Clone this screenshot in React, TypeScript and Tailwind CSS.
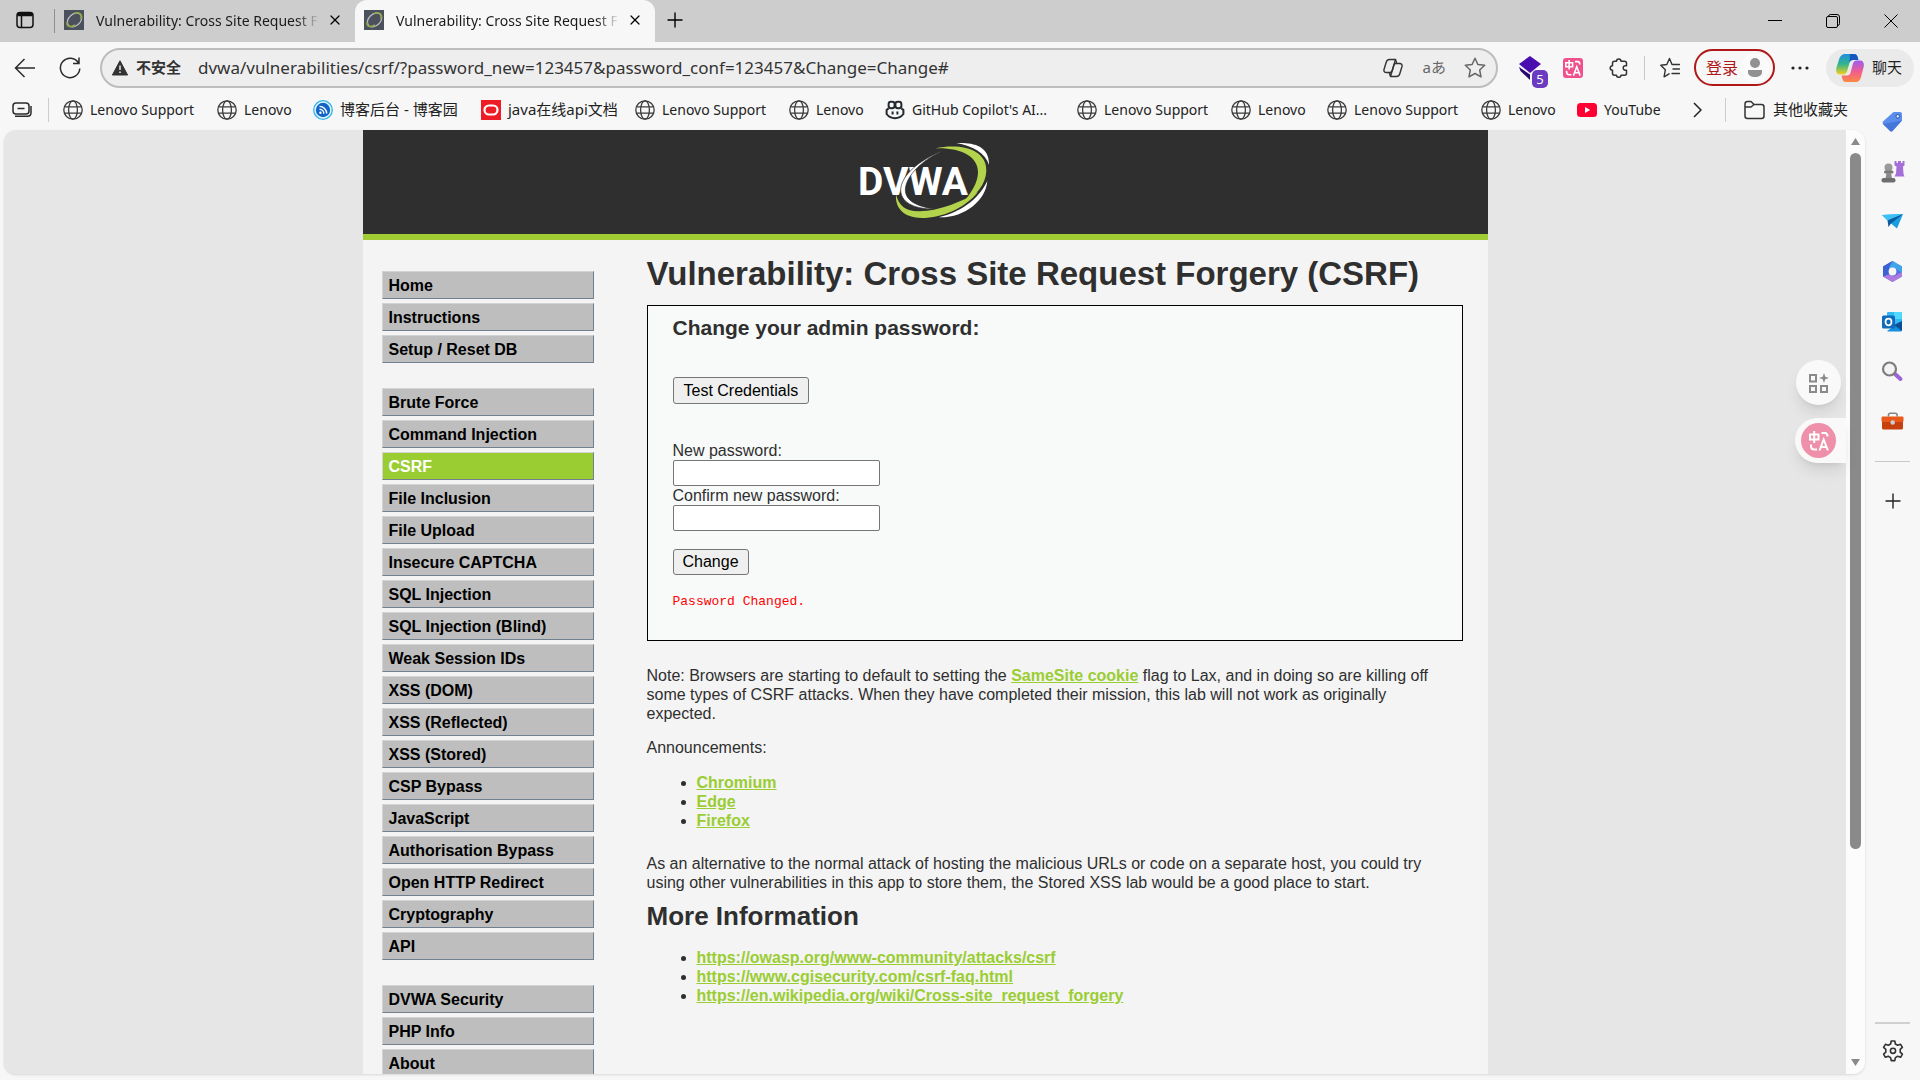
import { clsx } from 'clsx';
import { Plus, X } from 'lucide-react';
import type { ReactNode } from 'react';

const menuGroups = [
  ['Home', 'Instructions', 'Setup / Reset DB'],
  [
    'Brute Force',
    'Command Injection',
    'CSRF',
    'File Inclusion',
    'File Upload',
    'Insecure CAPTCHA',
    'SQL Injection',
    'SQL Injection (Blind)',
    'Weak Session IDs',
    'XSS (DOM)',
    'XSS (Reflected)',
    'XSS (Stored)',
    'CSP Bypass',
    'JavaScript',
    'Authorisation Bypass',
    'Open HTTP Redirect',
    'Cryptography',
    'API',
  ],
  ['DVWA Security', 'PHP Info', 'About'],
];

const announcements = ['Chromium', 'Edge', 'Firefox'];

const moreInfo = [
  'https://owasp.org/www-community/attacks/csrf',
  'https://www.cgisecurity.com/csrf-faq.html',
  'https://en.wikipedia.org/wiki/Cross-site_request_forgery',
];

function GlobeIcon() {
  return (
    <svg className="size-5 shrink-0" viewBox="0 0 20 20" fill="none" stroke="#3b3b3b" strokeWidth="1.3">
      <circle cx="10" cy="10" r="9.2" />
      <ellipse cx="10" cy="10" rx="4.4" ry="9.2" />
      <path d="M1.600 6.800h16.800M1.600 13.200h16.800" />
    </svg>
  );
}

function BlogIcon() {
  return (
    <svg className="size-5 shrink-0" viewBox="0 0 20 20">
      <circle cx="10" cy="10" r="9.3" fill="#e8f6fd" stroke="#2db4ea" strokeWidth="1.3" />
      <circle cx="10" cy="10" r="7.2" fill="#1264c8" />
      <g fill="none" stroke="#fff" strokeWidth="1.4">
        <path d="M6.5 9.3a4.5 4.5 0 0 1 4.4 4.4M6.5 6.4a7.3 7.3 0 0 1 7.2 7.2" />
      </g>
      <circle cx="7.4" cy="12.7" r="1.2" fill="#fff" />
    </svg>
  );
}

function OracleIcon() {
  return (
    <svg className="size-5 shrink-0" viewBox="0 0 20 20">
      <rect width="20" height="20" fill="#ee1c24" />
      <rect x="3.5" y="5.5" width="13" height="9" rx="4.5" fill="none" stroke="#fff" strokeWidth="2.2" />
    </svg>
  );
}

function CopilotGithubIcon() {
  return (
    <svg className="size-5 shrink-0" viewBox="0 0 20 20" fill="none" stroke="#24292f" strokeWidth="2">
      <rect x="3.6" y="1.8" width="6" height="6.4" rx="2.4" />
      <rect x="10.4" y="1.8" width="6" height="6.4" rx="2.4" />
      <path d="M3.6 8.4 1.6 10v4c2 2.6 5 4.2 8.4 4.2s6.4-1.6 8.4-4.2v-4l-2-1.6" />
      <path d="M7.6 11.5v3M12.4 11.5v3" />
    </svg>
  );
}

function YoutubeIcon() {
  return (
    <svg className="size-5 shrink-0" viewBox="0 0 20 20">
      <rect y="3" width="20" height="14" rx="3.5" fill="#ff0033" />
      <path d="M8 7v6l5.2-3z" fill="#fff" />
    </svg>
  );
}

const bookmarks: { label: string; icon: ReactNode; width: string }[] = [
  { label: 'Lenovo Support', icon: <GlobeIcon />, width: 'w-[154px]' },
  { label: 'Lenovo', icon: <GlobeIcon />, width: 'w-24' },
  { label: '博客后台 - 博客园', icon: <BlogIcon />, width: 'w-[168px] text-[15px]' },
  { label: 'java在线api文档', icon: <OracleIcon />, width: 'w-[154px] text-[15px]' },
  { label: 'Lenovo Support', icon: <GlobeIcon />, width: 'w-[154px]' },
  { label: 'Lenovo', icon: <GlobeIcon />, width: 'w-24' },
  { label: "GitHub Copilot's AI...", icon: <CopilotGithubIcon />, width: 'w-48' },
  { label: 'Lenovo Support', icon: <GlobeIcon />, width: 'w-[154px]' },
  { label: 'Lenovo', icon: <GlobeIcon />, width: 'w-24' },
  { label: 'Lenovo Support', icon: <GlobeIcon />, width: 'w-[154px]' },
  { label: 'Lenovo', icon: <GlobeIcon />, width: 'w-24' },
  { label: 'YouTube', icon: <YoutubeIcon />, width: 'w-24' },
];

function Favicon() {
  return (
    <svg className="size-5 shrink-0" viewBox="0 0 20 20">
      <rect width="20" height="20" fill="#4b515c" />
      <ellipse cx="10.5" cy="10" rx="8" ry="5.8" fill="none" stroke="#b9bcc0" strokeWidth="1.3" transform="rotate(-42 10.500 10)" />
      <path d="M10 3.500c5-2 8.500.5 7 5.500M3 12c-.5 4.500 3.500 6 8 3" fill="none" stroke="#93a84c" strokeWidth="1.6" />
    </svg>
  );
}

function Tab({ active }: { active?: boolean }) {
  return (
    <div className={clsx('flex h-full w-[300px] items-center pb-0.5 pl-[9px] pr-3', active && 'rounded-t-xl bg-[#f7f7f7]')}>
      <Favicon />
      <span className="ml-3 w-[224px] overflow-hidden whitespace-nowrap text-[14px] text-[#1b1b1b] [mask-image:linear-gradient(to_right,#000_90%,transparent)]">
        Vulnerability: Cross Site Request Forgery
      </span>
      <button className="ml-2" aria-label="Close tab">
        <X className="size-4 text-black" strokeWidth={1.8} />
      </button>
    </div>
  );
}

function TitleBar() {
  return (
    <div className="flex h-[42px] items-center bg-[#cdcdcd]">
      <button className="ml-4 mr-5 pb-0.5" aria-label="Tab actions">
        <svg className="size-[18px]" viewBox="0 0 18 18" fill="none" stroke="#111" strokeWidth="1.5">
          <rect x="1" y="1.5" width="16" height="15" rx="3" />
          <path d="M1.500 3.500h15" strokeWidth="3.5" />
          <path d="M5.500 5v11" />
        </svg>
      </button>
      <div className="h-6 w-px bg-[#8f8f8f]" />
      <Tab />
      <Tab active />
      <button className="ml-2 pb-0.5" aria-label="New tab">
        <Plus className="size-6 text-black" strokeWidth={1.4} />
      </button>
      <div className="ml-auto flex items-center gap-[44px] pr-[22px]">
        <button aria-label="Minimize">
          <svg className="size-[14px]" viewBox="0 0 14 14" stroke="#000"><path d="M0 6.500h14" /></svg>
        </button>
        <button aria-label="Restore">
          <svg className="size-[14px]" viewBox="0 0 14 14" fill="none" stroke="#000">
            <rect x=".5" y="2.5" width="11" height="11" rx="1.5" />
            <path d="M2.500 2.500Q2.500.5 4.500.5H11Q13.500.5 13.500 3V9.500Q13.500 11.500 11.500 11.500" />
          </svg>
        </button>
        <button aria-label="Close">
          <svg className="size-[14px]" viewBox="0 0 14 14" stroke="#000"><path d="M.5.5l13 13M13.500.5l-13 13" /></svg>
        </button>
      </div>
    </div>
  );
}

function CopilotLogo() {
  return (
    <svg className="size-7 shrink-0" viewBox="0 0 28 28">
      <defs>
        <linearGradient id="cpA" x1="0" y1="0" x2="0" y2="1">
          <stop offset="0" stopColor="#1d8fe0" />
          <stop offset=".5" stopColor="#33b58a" />
          <stop offset="1" stopColor="#f6cf1c" />
        </linearGradient>
        <linearGradient id="cpB" x1="0" y1="0" x2="0" y2="1">
          <stop offset="0" stopColor="#9a5cf0" />
          <stop offset=".5" stopColor="#ef5d92" />
          <stop offset="1" stopColor="#ff8a3c" />
        </linearGradient>
      </defs>
      <path d="M10 0h8c2 0 3 1 3.6 3l.8 3H17c-2 0-3 1-3.6 3l-2.200 8c-.7 2.500-2 3.500-4.200 3.500H4C.5 20.500-.5 17 .5 13.500L3 5.500C4 2 6 0 10 0z" fill="url(#cpA)" />
      <path d="M14 0h4c2 0 3 1 3.600 3l.8 3H17c-2 0-3 1-3.600 3z" fill="#1556c0" />
      <path d="M18 28h-8c-2 0-3-1-3.600-3l-.8-3.500H11c2 0 3-1 3.600-3l2.200-8.500c.7-2.500 2-3.500 4.200-3.500h3c3.500 0 4.500 3.500 3.500 7l-2.500 9.500c-1 3.500-3 5.500-7 5.500z" fill="url(#cpB)" />
    </svg>
  );
}

function ExtensionCube() {
  return (
    <div className="relative">
      <svg className="h-6 w-[22px]" viewBox="0 0 22 24">
        <path d="M11 0 22 8 11 17 0 8z" fill="#4a0db0" />
        <path d="M0 11 11 18.500v5.500L1.500 15z" fill="#2a0670" />
      </svg>
      <span className="absolute -right-[7px] -bottom-2 h-[18px] w-4 rounded-[5px] bg-[#6b3cc0] text-center text-[13px] leading-[18px] text-white">5</span>
    </div>
  );
}

// "中 / A" glyph shared by the toolbar button and the floating button
function TranslateGlyph({ className }: { className: string }) {
  return (
    <svg className={className} viewBox="0 0 20 20" fill="none" stroke="#fff" strokeWidth="2">
      <path d="M1 3.500h8.500V8.500H1zM5.200 0v12M12.500 2h3.500q2.500 0 2.500 3.500M2 13.500v1.500q0 3.500 3.500 3.500H8" />
      <path d="m10.500 19.500 4.200-11 4.200 11M12 16h5.500" />
    </svg>
  );
}

function StarIcon({ className }: { className: string }) {
  return (
    <svg className={className} viewBox="0 0 22 22" fill="none" stroke="currentColor" strokeWidth="1.5" strokeLinejoin="round">
      <path d="m11 1.200 2.900 6.300 6.800.8-5 4.700 1.300 6.900-6-3.400-6 3.400 1.300-6.900-5-4.700 6.800-.8z" />
    </svg>
  );
}

function Toolbar() {
  return (
    <div className="flex h-[51px] items-center pl-[14px] pr-[6px]">
      <button aria-label="Back">
        <svg className="size-[22px]" viewBox="0 0 22 22" fill="none" stroke="#2b2b2b" strokeWidth="1.5">
          <path d="M21 11H2M10.500 2 1.500 11l9 9" />
        </svg>
      </button>
      <button className="ml-[22px]" aria-label="Refresh">
        <svg className="size-6" viewBox="0 0 24 24" fill="none" stroke="#2b2b2b" strokeWidth="1.5">
          <path d="M20.500 7A9.700 9.700 0 1 0 21.800 12.500M21 1.500V7.500H15" />
        </svg>
      </button>
      <div className="ml-[18px] flex h-10 flex-1 items-center rounded-full border-2 border-[#bdbdbd] bg-[#eee] pr-2.5">
        <svg className="ml-2.5 size-4 shrink-0" viewBox="0 0 16 16">
          <path d="M8 .8 15.600 15H.4z" fill="#333" stroke="#333" strokeLinejoin="round" />
          <path d="M8 5.500v4.500M8 11.500v1.600" stroke="#eee" strokeWidth="1.5" />
        </svg>
        <span className="ml-2 text-[15px] font-bold text-[#333]">不安全</span>
        <input
          className="ml-[17px] min-w-0 flex-1 bg-transparent text-[17px] text-[#333] outline-none"
          aria-label="Address"
          defaultValue="dvwa/vulnerabilities/csrf/?password_new=123457&password_conf=123457&Change=Change#"
        />
        <button aria-label="Copilot">
          <svg className="size-5" viewBox="0 0 20 20" fill="none" stroke="#333" strokeWidth="1.4" strokeLinejoin="round">
            <path d="M6.500 1.500h6l-3.200 11c-.4 1.500-1 2-2.300 2H3.200C1.500 14.500.6 13 1 11.500L3.300 4c.5-1.700 1.500-2.500 3.200-2.500z" />
            <path d="M13.500 18.500h-6l3.200-11c.4-1.500 1-2 2.300-2h3.800c1.700 0 2.600 1.500 2.200 3L16.700 16c-.5 1.700-1.500 2.500-3.200 2.500zM12.500 1.500l1.300 4M7.500 18.500l-1.300-4" />
          </svg>
        </button>
        <button className="ml-5 text-[15px] text-[#666]">aあ</button>
        <button className="ml-[18px]" aria-label="Favorite">
          <StarIcon className="size-[22px] text-[#666]" />
        </button>
      </div>
      <div className="ml-[21px]"><ExtensionCube /></div>
      <button className="ml-[22px] flex size-5 items-center justify-center rounded-[3px] bg-[#f0508c]" aria-label="Translate">
        <TranslateGlyph className="size-4" />
      </button>
      <button className="ml-[26px]" aria-label="Extensions">
        <svg className="size-5" viewBox="0 0 20 20" fill="none" stroke="#333" strokeWidth="1.5" strokeLinejoin="round">
          <path d="M7.500 3.200c0-3 4.500-3 4.500 0h3.500q2 0 2 2v2.600h-1.200c-2.800 0-2.800 4.400 0 4.400h1.200v3q0 2-2 2H12c0 2.800-4.500 2.800-4.500 0H5.500q-2 0-2-2v-3C.4 12.200.4 7.800 3.500 7.800V5.200q0-2 2-2z" />
        </svg>
      </button>
      <div className="ml-[15px] h-6 w-px bg-[#c8c8c8]" />
      <button className="ml-[15px]" aria-label="Favorites">
        <svg className="h-[22px] w-5" viewBox="0 0 20 22" fill="none" stroke="#333" strokeWidth="1.4" strokeLinejoin="round" strokeLinecap="round">
          <path d="M12 7.500 9.500 1.500 6.800 7.500.8 8.300l4.500 4.500-1.200 7 5-3M12 7.500h7.500M13 12h6.500M12 16.500h7.500" />
        </svg>
      </button>
      <button className="ml-[14px] flex h-[37px] w-[81px] items-center rounded-full border-2 border-[#b01818] pl-2.5 text-[16px] text-[#b01818]">
        登录
        <svg className="ml-auto mr-1 size-7" viewBox="0 0 28 28" fill="#919191">
          <circle cx="14" cy="14" r="13.5" fill="#fafafa" stroke="#fff" />
          <circle cx="14" cy="9" r="5" />
          <path d="M7 16h14v2c0 3.500-3 5-7 5s-7-1.500-7-5z" />
        </svg>
      </button>
      <button className="ml-4" aria-label="More">
        <svg className="h-1 w-[18px]" viewBox="0 0 18 4" fill="#222">
          <circle cx="2" cy="2" r="1.6" /><circle cx="9" cy="2" r="1.6" /><circle cx="16" cy="2" r="1.6" />
        </svg>
      </button>
      <button className="ml-[17px] flex h-[38px] w-[88px] items-center gap-2 rounded-full bg-[#eaeaea] pl-2.5 text-[15px] text-[#222]">
        <CopilotLogo />
        聊天
      </button>
    </div>
  );
}

function BookmarkBar() {
  return (
    <div className="flex h-[37px] items-center pb-1 pl-3 text-[14px] text-[#222]">
      <button aria-label="Workspaces">
        <svg className="h-4 w-5" viewBox="0 0 20 16" fill="none" stroke="#2b2b2b" strokeWidth="1.5">
          <rect x="1" y="1" width="16" height="11" rx="3" />
          <path d="M5.500 6.500h7M3 14.200h12.500q3.500 0 3.500-3.500V4" />
        </svg>
      </button>
      <div className="ml-4 mr-[14px] h-6 w-px shrink-0 bg-[#ccc]" />
      <nav className="flex items-center">
        {bookmarks.map(({ label, icon, width }, i) => (
          <a key={i} href="#" className={clsx('flex shrink-0 items-center gap-[7px] whitespace-nowrap', width)}>
            {icon}
            {label}
          </a>
        ))}
      </nav>
      <button className="ml-auto" aria-label="More bookmarks">
        <svg className="h-4 w-[9px]" viewBox="0 0 9 16" fill="none" stroke="#222" strokeWidth="1.5"><path d="m1 1 7 7-7 7" /></svg>
      </button>
      <div className="ml-[23px] h-6 w-px bg-[#ccc]" />
      <a href="#" className="ml-[18px] mr-[72px] flex items-center gap-2 text-[15px] whitespace-nowrap">
        <svg className="h-5 w-[21px]" viewBox="0 0 21 20" fill="none" stroke="#333" strokeWidth="1.5" strokeLinejoin="round">
          <path d="M1 4q0-2.500 2.500-2.500H7l3 3h7.500Q20 4.500 20 7v9q0 2.500-2.500 2.500h-14Q1 18.500 1 16zM1 7h6l3-2.500" />
        </svg>
        其他收藏夹
      </a>
    </div>
  );
}

function DvwaLogo() {
  return (
    <svg className="h-[78px] w-[134px]" viewBox="30 21 402 234" role="img" aria-label="DVWA">
      <path d="M325 24c45-2 100 5 98 66-10-35-50-58-98-66z" fill="#fff" />
      <path d="M418 138c-5 60-70 112-146 109 60-14 118-50 146-109z" fill="#fff" />
      <path d="M262 40c80-16 155 5 153 68-2 38-28 75-75 101 30-35 50-65 50-98 0-48-54-74-128-71z" fill="#b2d34b" />
      <path d="M144 178c8 36 32 52 70 51 62-2 125-28 176-58-40 50-110 78-168 78-50 0-82-26-78-71z" fill="#b2d34b" />
      <text x="30" y="180" fill="#fff" className="font-[Roboto,sans-serif] text-[117px] font-bold">DVWA</text>
      <path d="M283 47C215 75 160 120 158 164c0 36 36 58 100 58-50-8-86-24-86-58 2-42 50-88 111-117z" fill="#fff" stroke="#2f2f2f" strokeWidth="2" />
    </svg>
  );
}

function SideMenu() {
  return (
    <nav className="flex w-[212px] shrink-0 flex-col gap-[25px]">
      {menuGroups.map((group, i) => (
        <ul key={i} className="flex flex-col gap-1">
          {group.map((item) => (
            <li key={item}>
              <a
                href="#"
                className={clsx(
                  'block h-7 border border-t-[#d3d3d3] border-r-[#708090] border-b-[#708090] border-l-[#d3d3d3] pl-[6px] text-[16px] leading-7 font-bold',
                  item === 'CSRF' ? 'bg-[#9acd32] text-white' : 'bg-[#bebebe] text-black',
                )}
              >
                {item}
              </a>
            </li>
          ))}
        </ul>
      ))}
    </nav>
  );
}

function LinkList({ items }: { items: string[] }) {
  return (
    <ul className="list-disc pl-[50px]">
      {items.map((item) => (
        <li key={item}>
          <a href="#" className="font-bold text-[#9acd32] underline">{item}</a>
        </li>
      ))}
    </ul>
  );
}

function DvwaPage() {
  return (
    <div className="mx-auto min-h-full max-w-[1125px] bg-[#f4f4f4] font-['Liberation_Sans',Arial,sans-serif] text-[16px] leading-[19px] text-[#2f2f2f]">
      <header className="flex h-[110px] justify-center border-b-[6px] border-[#a1cc33] bg-[#2f2f2f] pt-3">
        <DvwaLogo />
      </header>
      <div className="flex pt-[31px] pr-[25px] pl-[19px]">
        <SideMenu />
        <main className="-mt-[18px] ml-[53px] min-w-0 flex-1">
          <h1 className="text-[33px] leading-[42px] font-bold">Vulnerability: Cross Site Request Forgery (CSRF)</h1>
          <section className="mt-2.5 border border-black bg-[#f8fafa] px-[25px] pt-[9px] pb-[29px]">
            <h3 className="text-[21px] leading-[26px] font-bold">Change your admin password:</h3>
            <button className="mt-9 block h-[27px] rounded-[3px] border border-[#767676] bg-[#efefef] px-[10px] text-[16px] leading-[25px] text-black">
              Test Credentials
            </button>
            <form className="mt-[37px]">
              <label htmlFor="password_new" className="block">New password:</label>
              <input id="password_new" type="password" className="block h-[26px] w-[207px] rounded-[2px] border border-[#767676] bg-white" />
              <label htmlFor="password_conf" className="block">Confirm new password:</label>
              <input id="password_conf" type="password" className="block h-[26px] w-[207px] rounded-[2px] border border-[#767676] bg-white" />
              <button type="button" className="mt-[18px] block h-[26px] rounded-[3px] border border-[#767676] bg-[#efefef] px-[9px] text-[16px] leading-6 text-black">
                Change
              </button>
            </form>
            <pre className="mt-[17px] font-['Liberation_Mono',monospace] text-[13px] leading-[19px] text-[#ff0000]">Password Changed.</pre>
          </section>
          <p className="mt-[25px] pr-3">
            Note: Browsers are starting to default to setting the{' '}
            <a href="#" className="font-bold text-[#9acd32] underline">SameSite cookie</a> flag to Lax, and in doing so are
            killing off some types of CSRF attacks. When they have completed their mission, this lab will not work as
            originally expected.
          </p>
          <p className="mt-[15px] mb-4">Announcements:</p>
          <LinkList items={announcements} />
          <p className="mt-6 pr-3">
            As an alternative to the normal attack of hosting the malicious URLs or code on a separate host, you could try
            using other vulnerabilities in this app to store them, the Stored XSS lab would be a good place to start.
          </p>
          <h2 className="mt-2 mb-4 text-[26px] leading-8 font-bold">More Information</h2>
          <LinkList items={moreInfo} />
        </main>
      </div>
    </div>
  );
}

function FloatingButtons() {
  return (
    <div className="absolute top-[230px] right-[19px] flex flex-col items-end gap-[13px]">
      <button className="mr-[5px] flex size-[45px] items-center justify-center rounded-full bg-[#f9f9f9] shadow-lg" aria-label="Apps">
        <svg className="size-5" viewBox="0 0 20 20" fill="none" stroke="#8a8a8a" strokeWidth="2">
          <path d="M1 2h6v6.500H1zM1 13h6v6H1zM12 13h6v6h-6z" />
          <path d="m15 0 1.300 3.700 3.700 1.300-3.700 1.300L15 10l-1.300-3.700L10 5l3.700-1.300z" fill="#8a8a8a" stroke="none" />
        </svg>
      </button>
      <button className="flex h-[45px] w-[51px] items-center rounded-l-full bg-[#f9f9f9] pl-[6px] shadow-lg" aria-label="Translate page">
        <span className="flex size-[35px] items-center justify-center rounded-full bg-[#ee90a9]">
          <TranslateGlyph className="size-5" />
        </span>
      </button>
    </div>
  );
}

function Scrollbar() {
  return (
    <div className="flex w-[19px] shrink-0 flex-col items-center bg-[#fcfcfc] py-2">
      <svg className="h-[7px] w-[9px]" viewBox="0 0 9 7" fill="#8a8a8a"><path d="M4.500 0 9 7H0z" /></svg>
      <div className="mt-2 h-[696px] w-[11px] rounded-full bg-[#8a8a8a]" />
      <svg className="mt-auto h-[7px] w-[9px]" viewBox="0 0 9 7" fill="#8a8a8a"><path d="M4.500 7 9 0H0z" /></svg>
    </div>
  );
}

const sidebarIcons: { label: string; icon: ReactNode }[] = [
  {
    label: 'Shopping',
    icon: (
      <>
        <path d="M11.500 1h6.500q2 0 2 2v6.500L10.500 20q-1.200 1-2.400 0L1 13q-1-1.200 0-2.400z" fill="#5b8def" />
        <path d="M20 9.500 10.500 20q-1.200 1-2.400 0L1 13z" fill="#4677d8" />
        <circle cx="15.800" cy="5.300" r="1.8" fill="#dce8ff" stroke="#28539f" />
      </>
    ),
  },
  {
    label: 'Games',
    icon: (
      <>
        <path d="M12.500 0h2v2h1.500V0h3v2h1.500V0h2v4.500l-1.500 1 .5 7.500 1 2.500h-10l1.500-3 .5-7-2-1z" fill="#a56fd8" />
        <circle cx="6.500" cy="6.500" r="4" fill="#9a9a9a" />
        <rect x="2" y="9.500" width="9.500" height="3" rx="1.5" fill="#7a7a7a" />
        <path d="M4.500 12h4.500l1 5.500h-6.500z" fill="#8a8a8a" />
        <rect x="-.5" y="17" width="14" height="4.5" rx="2" fill="#6e6e6e" />
      </>
    ),
  },
  {
    label: 'Drop',
    icon: (
      <>
        <path d="M0 4 21 3l-6 14.500-6-5z" fill="#1b9de2" />
        <path d="M0 4 21 3 5.500 9.500z" fill="#3cc1f5" />
        <path d="M5.500 9.500 21 3 9 12.500 6.500 16z" fill="#0a5a9e" />
      </>
    ),
  },
  {
    label: 'Microsoft 365',
    icon: (
      <>
        <path d="M10.500 0 20 5.500v10L10.500 21 1 15.500v-10z" fill="#5a6fe0" strokeLinejoin="round" />
        <path d="M10.500 0 20 5.500V12l-6-4-7-1z" fill="#3fa4ea" />
        <path d="M20 11v4.500L10.500 21 1 15.500l5.500-2 5.500 2z" fill="#b07be0" />
        <path d="M10.500 0 1 5.500v10l6-2.500V6z" fill="#3a62d0" />
        <circle cx="10.500" cy="10.500" r="3.9" fill="#f7f7f7" />
      </>
    ),
  },
  {
    label: 'Outlook',
    icon: (
      <>
        <rect x="5" y="1" width="15" height="14" rx="1" fill="#35b8f1" />
        <path d="M12 1h8v7h-8z" fill="#50d9ff" />
        <path d="m5 20 15-10v9q0 1.500-1.500 1.500H6z" fill="#1490df" />
        <path d="m12 14 8 6V10z" fill="#0a4f94" />
        <rect y="4.500" width="13" height="13" rx="1.5" fill="#0f6cbd" />
        <ellipse cx="6.500" cy="11" rx="3" ry="3.3" fill="none" stroke="#fff" strokeWidth="1.7" />
      </>
    ),
  },
  {
    label: 'Search',
    icon: (
      <>
        <path d="m13 13 5.500 5" stroke="#9a66d6" strokeWidth="4" strokeLinecap="round" />
        <circle cx="7.500" cy="8" r="6.5" fill="#f3f3f3" stroke="#7d7d7d" strokeWidth="2.2" />
      </>
    ),
  },
  {
    label: 'Tools',
    icon: (
      <>
        <path d="M6.500 5.500V4q0-1.800 1.800-1.800h5q1.800 0 1.800 1.800v1.500" fill="none" stroke="#858585" strokeWidth="1.6" />
        <rect x="0" y="9" width="21" height="9.5" rx="1.5" fill="#c6400e" />
        <rect x="-.5" y="5.500" width="22" height="5.5" rx="1.2" fill="#e8591b" />
        <circle cx="10.700" cy="11.500" r="2.2" fill="#c9d2da" />
      </>
    ),
  },
];

function EdgeSidebar() {
  return (
    <aside className="flex w-[55px] shrink-0 flex-col items-center pb-[18px]">
      <div className="-mt-5 flex flex-col gap-7 pt-px pl-px">
        {sidebarIcons.map(({ label, icon }) => (
          <button key={label} aria-label={label}>
            <svg className="size-[22px] overflow-visible" viewBox="0 0 22 22">{icon}</svg>
          </button>
        ))}
      </div>
      <div className="mt-7 h-px w-[35px] bg-[#c9c9c9]" />
      <button className="mt-[27px]" aria-label="Add">
        <Plus className="size-6 text-[#222]" strokeWidth={1.4} />
      </button>
      <div className="mt-auto h-[2px] w-[35px] bg-[#d0d0d0]" />
      <button className="mt-4" aria-label="Settings">
        <svg className="size-[22px]" viewBox="0 0 22 22" fill="none" stroke="#333" strokeWidth="1.6" strokeLinejoin="round">
          <path d="M9.200 1h3.600l.6 3 2.300 1.300 2.900-1 1.800 3.100-2.200 2v2.800l2.200 2-1.800 3.100-2.900-1-2.300 1.300-.6 3H9.200l-.6-3-2.300-1.300-2.900 1-1.800-3.100 2.200-2V9.400l-2.200-2 1.800-3.100 2.900 1L8.600 4z" />
          <circle cx="11" cy="10.800" r="2.6" />
        </svg>
      </button>
    </aside>
  );
}

export default function App() {
  return (
    <div className="flex h-screen flex-col overflow-hidden bg-[#f7f7f7] font-['Noto_Sans','Noto_Sans_CJK_SC',sans-serif]">
      <TitleBar />
      <Toolbar />
      <BookmarkBar />
      <div className="flex min-h-0 flex-1">
        <div className="relative mb-[6px] ml-1 flex min-w-0 flex-1 overflow-hidden rounded-xl bg-[#e6e6e6] shadow-sm">
          <div className="min-w-0 flex-1 overflow-hidden">
            <DvwaPage />
          </div>
          <Scrollbar />
          <FloatingButtons />
        </div>
        <EdgeSidebar />
      </div>
    </div>
  );
}
